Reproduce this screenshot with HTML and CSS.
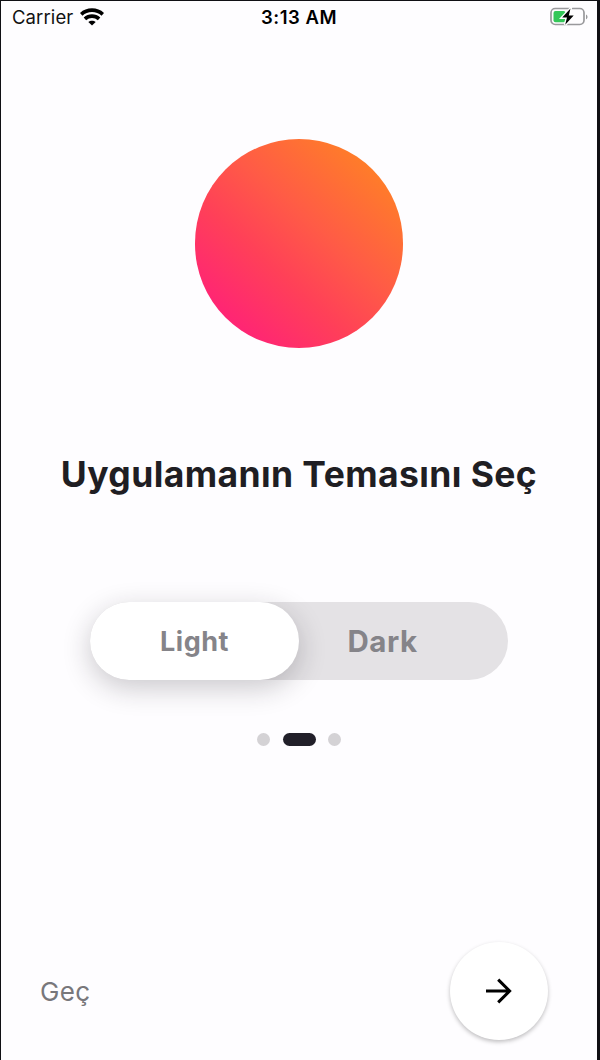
FILE: index.html
```html
<!DOCTYPE html>
<html lang="tr">
<head>
<meta charset="utf-8">
<title>Tema</title>
<link rel="stylesheet" href="styles.css">
</head>
<body>
<div class="screen">
  <header class="status">
    <div class="carrier"><span class="carrier-name">Carrier</span>
      <svg class="wifi" width="24" height="18" viewBox="0 0 24 18" fill="none" stroke="#000" stroke-width="3.7">
        <path d="M1.2 6.4C7.2 .8 16.8 .8 22.8 6.4"/>
        <path d="M4.9 10.9C9 7.2 15 7.2 19.1 10.9"/>
        <path d="M12 17.4L8.3 14.1C10.4 12.2 13.6 12.2 15.7 14.1Z" fill="#000" stroke="none"/>
      </svg>
    </div>
    <span class="time">3:13 AM</span>
    <svg class="battery" width="38" height="20" viewBox="0 0 38 20">
      <rect x="1" y="1.5" width="33" height="16" rx="4.2" fill="none" stroke="#99999c" stroke-width="1.7"/>
      <path d="M36 7.5c2 .8 2 4 0 4.8z" fill="#99999c"/>
      <rect x="3.5" y="4" width="12" height="11.2" rx="2" fill="#34c759"/>
      <path d="M20.5 1.6L12.2 10.5H17L15.2 17.8L23.7 8.5H18.8Z" fill="#000" stroke="#fff" stroke-width="2.8" paint-order="stroke"/>
    </svg>
  </header>
  <main class="content">
    <div class="sun"></div>
    <h1 class="title">Uygulamanın Temasını Seç</h1>
    <div class="toggle">
      <button class="option active">Light</button>
      <button class="option dark">Dark</button>
    </div>
    <div class="dots"><i class="dot"></i><i class="dot current"></i><i class="dot"></i></div>
  </main>
  <footer class="footer">
    <span class="skip">Geç</span>
    <button class="next" aria-label="İleri">
      <svg width="26" height="26" viewBox="0 0 26 26" fill="none" stroke="#000" stroke-width="3">
        <path d="M0 13H23.5M12.2 1.6L23.6 13L12.2 24.4"/>
      </svg>
    </button>
  </footer>
</div>
</body>
</html>
```
FILE: styles.css
```css
* { box-sizing: border-box; }
body { margin: 0; font-family: Inter, "Liberation Sans", sans-serif; }
button { border: 0; padding: 0; font-family: inherit; }
svg { display: block; }
.screen {
  height: 1060px;
  display: flex;
  flex-direction: column;
  background: #fefdff;
  border: solid #101014;
  border-width: 1px 3px 0 1px;
  overflow: hidden;
}
.status {
  height: 34px;
  display: grid;
  grid-template-columns: 1fr auto 1fr;
  align-items: center;
  padding: 0 9px 2px 11px;
  color: #111;
}
.carrier { display: flex; align-items: center; gap: 7px; }
.carrier-name { font-size: 18.5px; letter-spacing: 0.1px; }
.time { margin-right: 2px; font-size: 18.5px; font-weight: 600; letter-spacing: 0.5px; color: #000; }
.battery { justify-self: end; }
.content { display: flex; flex-direction: column; align-items: center; }
.sun {
  width: 208.5px;
  height: 208.5px;
  margin: 104px 0 0.5px;
  border-radius: 50%;
  background: linear-gradient(42deg, #ff2475 14%, #ff4058 38%, #ff5b46 58%, #ff7f27 88%);
}
.title {
  margin: 105px 0 0;
  font-size: 35.5px;
  line-height: 44px;
  font-weight: 650;
  letter-spacing: 0.4px;
  color: #1f1e23;
  white-space: nowrap;
}
.toggle {
  width: 418px;
  height: 78px;
  margin-top: 105px;
  border-radius: 39px;
  display: flex;
  background: #e4e2e5;
}
.option {
  width: 209px;
  border-radius: 39px;
  background: none;
  font-size: 27px;
  font-weight: 650;
  letter-spacing: 0.5px;
  color: #858489;
}
.active { background: #fff; box-shadow: 0 8px 28px rgba(30, 27, 35, .23); }
.dark { font-size: 29.5px; padding-right: 42px; }
.dots { display: flex; gap: 12.5px; margin-top: 53px; }
.dot { width: 13px; height: 13px; border-radius: 7px; background: #d4d2d5; }
.current { width: 33px; background: #211f29; }
.footer {
  margin-top: auto;
  padding: 0 49px 20px 39px;
  display: flex;
  justify-content: space-between;
  align-items: center;
}
.skip { font-size: 26px; letter-spacing: 0.3px; color: #78777b; }
.next {
  width: 98px;
  height: 98px;
  border-radius: 50%;
  display: grid;
  place-items: center;
  background: #fff;
  box-shadow: 0 2px 4px rgba(0, 0, 0, .25);
}
```
